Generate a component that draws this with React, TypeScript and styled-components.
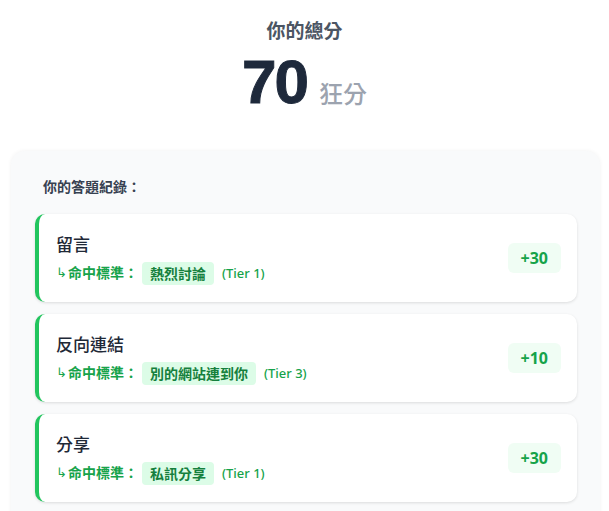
import styled, { createGlobalStyle } from "styled-components";

const GlobalStyle = createGlobalStyle`
  html, body {
    margin: 0;
    padding: 0;
    background: #ffffff;
  }
  body {
    font-family: "Noto Sans", "Noto Sans CJK TC", sans-serif;
  }
`;

interface Answer {
  title: string;
  criterion: string;
  tier: number;
  points: number;
}

const answers: Answer[] = [
  { title: "留言", criterion: "熱烈討論", tier: 1, points: 30 },
  { title: "反向連結", criterion: "別的網站連到你", tier: 3, points: 10 },
  { title: "分享", criterion: "私訊分享", tier: 1, points: 30 },
];

const Page = styled.main`
  width: 609px;
  height: 511px;
  overflow: hidden;
`;

const ScoreHeader = styled.header`
  display: flex;
  flex-direction: column;
  align-items: center;
  padding-top: 17px;
`;

const ScoreLabel = styled.h2`
  margin: 0;
  font-size: 19px;
  line-height: 28px;
  font-weight: 700;
  color: #4b5563;
`;

const ScoreRow = styled.div`
  display: flex;
  align-items: baseline;
  gap: 12px;
  margin-top: 6px;
`;

const ScoreNumber = styled.span`
  font-family: "Liberation Sans", Arial, sans-serif;
  font-size: 62px;
  line-height: 1;
  font-weight: 900;
  letter-spacing: -2px;
  color: #1e293b;
  -webkit-text-stroke: 1px #1e293b;
`;

const ScoreUnit = styled.span`
  font-size: 24px;
  font-weight: 500;
  color: #9ca3af;
`;

const HistoryPanel = styled.section`
  margin: 38px 9px 0 11px;
  padding: 24px 23px 24px 24px;
  background: #f9fafb;
  border-radius: 14px;
  box-shadow: 0 0 4px rgba(0, 0, 0, 0.06);
`;

const HistoryTitle = styled.h3`
  margin: 0 0 15px 8px;
  font-size: 14px;
  line-height: 24px;
  font-weight: 700;
  color: #374151;
`;

const CardList = styled.div`
  display: flex;
  flex-direction: column;
  gap: 12px;
`;

const Card = styled.article`
  display: flex;
  align-items: center;
  justify-content: space-between;
  height: 88px;
  box-sizing: border-box;
  padding: 0 16px 0 17px;
  background: #ffffff;
  border-left: 4px solid #22c55e;
  border-radius: 10px;
  box-shadow: 0 1px 3px rgba(0, 0, 0, 0.12);
`;

const CardBody = styled.div`
  display: flex;
  flex-direction: column;
  gap: 4px;
  padding-top: 2px;
`;

const CardTitle = styled.div`
  font-size: 17px;
  line-height: 24px;
  font-weight: 500;
  color: #1f2937;
`;

const CriterionRow = styled.div`
  display: flex;
  align-items: center;
  font-size: 14px;
  line-height: 24px;
  font-weight: 700;
  color: #16a34a;
`;

const Arrow = styled.span`
  font-family: "DejaVu Sans", sans-serif;
  font-size: 13px;
  font-weight: 400;
  margin-right: 1px;
`;

const CriterionTag = styled.span`
  margin-left: 4px;
  padding: 0 8px;
  background: #dcfce7;
  color: #15803d;
  border-radius: 4px;
  line-height: 23px;
`;

const TierText = styled.span`
  margin-left: 8px;
  font-size: 13px;
  font-weight: 500;
  color: #16a34a;
`;

const PointsBadge = styled.div`
  padding: 0 13px;
  height: 30px;
  line-height: 30px;
  background: #f0fdf4;
  border-radius: 6px;
  font-size: 16px;
  font-weight: 700;
  color: #16a34a;
`;

export default function App() {
  return (
    <Page>
      <GlobalStyle />
      <ScoreHeader>
        <ScoreLabel>你的總分</ScoreLabel>
        <ScoreRow>
          <ScoreNumber>70</ScoreNumber>
          <ScoreUnit>狂分</ScoreUnit>
        </ScoreRow>
      </ScoreHeader>
      <HistoryPanel>
        <HistoryTitle>你的答題紀錄：</HistoryTitle>
        <CardList>
          {answers.map((a) => (
            <Card key={a.title}>
              <CardBody>
                <CardTitle>{a.title}</CardTitle>
                <CriterionRow>
                  <Arrow>↳</Arrow>命中標準：
                  <CriterionTag>{a.criterion}</CriterionTag>
                  <TierText>(Tier {a.tier})</TierText>
                </CriterionRow>
              </CardBody>
              <PointsBadge>+{a.points}</PointsBadge>
            </Card>
          ))}
        </CardList>
      </HistoryPanel>
    </Page>
  );
}
